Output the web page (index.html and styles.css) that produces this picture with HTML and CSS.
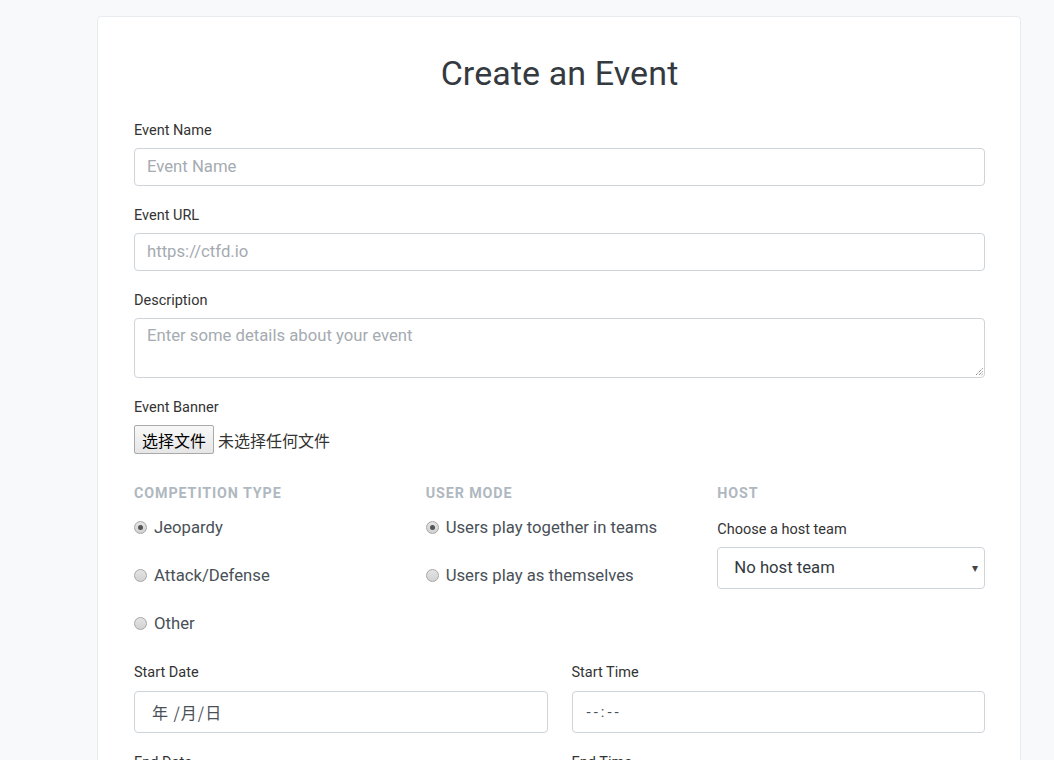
FILE: index.html
```html
<!DOCTYPE html>
<html lang="en">
<head>
<meta charset="utf-8">
<title>Create an Event</title>
<link rel="stylesheet" href="styles.css">
</head>
<body>
<div class="card">
  <h1 class="title">Create an Event</h1>

  <div class="group">
    <div class="label">Event Name</div>
    <div class="input"><span class="ph">Event Name</span></div>
  </div>

  <div class="group">
    <div class="label">Event URL</div>
    <div class="input"><span class="ph">https://ctfd.io</span></div>
  </div>

  <div class="group">
    <div class="label">Description</div>
    <div class="textarea"><span class="ph">Enter some details about your event</span>
      <svg class="grip" width="9" height="9" viewBox="0 0 9 9"><path d="M8.5 1.5 L1.5 8.5 M8.5 4.5 L4.5 8.5 M8.5 7 L7 8.5" stroke="#555" stroke-width="1" stroke-dasharray="1 1"/></svg>
    </div>
  </div>

  <div class="group">
    <div class="label">Event Banner</div>
    <div class="file">
      <span class="file-btn">选择文件</span>
      <span class="file-text">未选择任何文件</span>
    </div>
  </div>

  <div class="cols3">
    <div class="col">
      <div class="heading">Competition Type</div>
      <div class="radio"><span class="dot checked"></span>Jeopardy</div>
      <div class="radio"><span class="dot"></span>Attack/Defense</div>
      <div class="radio"><span class="dot"></span>Other</div>
    </div>
    <div class="col">
      <div class="heading">User Mode</div>
      <div class="radio"><span class="dot checked"></span>Users play together in teams</div>
      <div class="radio"><span class="dot"></span>Users play as themselves</div>
    </div>
    <div class="col">
      <div class="heading">Host</div>
      <div class="label host-label">Choose a host team</div>
      <div class="select"><span>No host team</span><span class="arrow">▾</span></div>
    </div>
  </div>

  <div class="cols2">
    <div class="col">
      <div class="label">Start Date</div>
      <div class="input tall"><span class="val date">年 /月/日</span></div>
    </div>
    <div class="col">
      <div class="label">Start Time</div>
      <div class="input tall"><span class="val time">--:--</span></div>
    </div>
  </div>

  <div class="cols2 next">
    <div class="col">
      <div class="label">End Date</div>
      <div class="input tall"><span class="val date">年 /月/日</span></div>
    </div>
    <div class="col">
      <div class="label">End Time</div>
      <div class="input tall"><span class="val time">--:--</span></div>
    </div>
  </div>
</div>
</body>
</html>
```

FILE: styles.css
```css
html, body {
  margin: 0;
  padding: 0;
}
body {
  background: #f8f9fa;
  font-family: Roboto, "Noto Sans", "Liberation Sans", sans-serif;
  color: #333;
  overflow: hidden;
  height: 760px;
}
.card {
  margin: 16px 0 0 97px;
  width: 851px;
  padding: 33px 35px 40px 36px;
  background: #fff;
  border: 1px solid #e9ecef;
  border-radius: 4px;
}
.title {
  margin: 0 0 22px 0;
  text-align: center;
  font-size: 34px;
  font-weight: 400;
  color: #343a40;
  line-height: 1.4;
  letter-spacing: 0.1px;
}
.group {
  margin-bottom: 19px;
}
.label {
  font-size: 14.5px;
  line-height: 21px;
  color: #333;
  margin-bottom: 7px;
}
.input {
  height: 38px;
  box-sizing: border-box;
  border: 1px solid #ced4da;
  border-radius: 4px;
  padding: 0 12px;
  display: flex;
  align-items: center;
  font-size: 16.7px;
}
.input.tall {
  height: 42px;
}
.ph {
  color: #a5abb1;
}
.textarea {
  position: relative;
  height: 60px;
  box-sizing: border-box;
  border: 1px solid #ced4da;
  border-radius: 4px;
  padding: 6px 12px;
  font-size: 16.7px;
  line-height: 22px;
}
.grip {
  position: absolute;
  right: 1px;
  bottom: 1px;
}
.file {
  display: flex;
  align-items: center;
  height: 30px;
  margin-top: 0;
}
.file-btn {
  box-sizing: border-box;
  height: 29px;
  width: 80px;
  display: flex;
  align-items: center;
  justify-content: center;
  border: 1px solid #a9a9a9;
  border-radius: 2px;
  background: linear-gradient(#f8f8f8, #e6e6e6);
  font-family: "Noto Sans CJK SC", sans-serif;
  font-size: 16px;
  color: #000;
}
.file-text {
  margin-left: 4px;
  font-family: "Noto Sans CJK SC", sans-serif;
  font-size: 16px;
  color: #333;
}
.cols3 {
  display: grid;
  grid-template-columns: 1fr 1fr 1fr;
  column-gap: 24px;
  margin-top: 28px;
}
.cols2 {
  display: grid;
  grid-template-columns: 1fr 1fr;
  column-gap: 24px;
  margin-top: 2px;
}
.cols2 .label {
  margin-bottom: 8px;
}
.cols2.next {
  margin-top: 19px;
}
.heading {
  font-size: 14.3px;
  font-weight: 700;
  text-transform: uppercase;
  letter-spacing: 0.9px;
  color: #b0b8bf;
  line-height: 21px;
  margin-bottom: 12px;
}
.radio {
  display: flex;
  align-items: center;
  font-size: 16.7px;
  color: #495057;
  height: 24px;
  margin-bottom: 24px;
}
.dot {
  width: 11px;
  height: 11px;
  border-radius: 50%;
  border: 1px solid #a6a6a6;
  background: linear-gradient(#e4e4e4, #d2d2d2);
  margin-right: 7px;
  display: flex;
  align-items: center;
  justify-content: center;
  flex: none;
}
.dot.checked::after {
  content: "";
  width: 5px;
  height: 5px;
  border-radius: 50%;
  background: #555;
}
.host-label {
  margin-top: 15px;
  margin-bottom: 7px;
}
.select {
  height: 42px;
  box-sizing: border-box;
  border: 1px solid #ced4da;
  border-radius: 4px;
  padding: 0 6px 0 16px;
  display: flex;
  align-items: center;
  justify-content: space-between;
  font-size: 16.7px;
  color: #343a40;
}
.arrow {
  font-size: 12px;
  color: #444;
}
.val {
  color: #495057;
}
.val.date {
  padding-left: 5px;
  font-family: "Noto Sans CJK SC", sans-serif;
  font-size: 16px;
  letter-spacing: 1px;
}
.val.time {
  padding-left: 2px;
  font-size: 15px;
  letter-spacing: 3px;
}
```
